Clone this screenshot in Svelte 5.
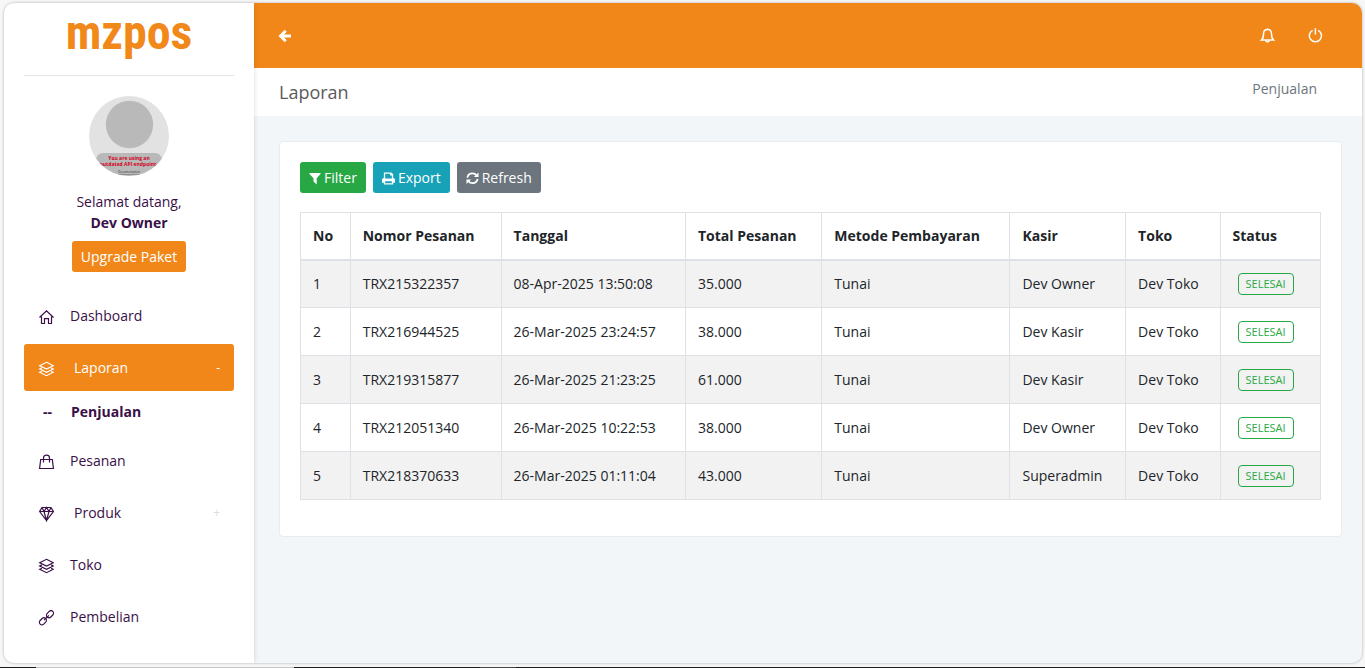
<script>
  const orders = [
    { no: 1, code: 'TRX215322357', date: '08-Apr-2025 13:50:08', total: '35.000', cashier: 'Dev Owner' },
    { no: 2, code: 'TRX216944525', date: '26-Mar-2025 23:24:57', total: '38.000', cashier: 'Dev Kasir' },
    { no: 3, code: 'TRX219315877', date: '26-Mar-2025 21:23:25', total: '61.000', cashier: 'Dev Kasir' },
    { no: 4, code: 'TRX212051340', date: '26-Mar-2025 10:22:53', total: '38.000', cashier: 'Dev Owner' },
    { no: 5, code: 'TRX218370633', date: '26-Mar-2025 01:11:04', total: '43.000', cashier: 'Superadmin' }
  ];
  const headings = ['No', 'Nomor Pesanan', 'Tanggal', 'Total Pesanan', 'Metode Pembayaran', 'Kasir', 'Toko', 'Status'];
  const menu = [
    { label: 'Dashboard', icon: 'home' },
    { label: 'Laporan', icon: 'layers', active: true, mark: '-', child: 'Penjualan' },
    { label: 'Pesanan', icon: 'bag' },
    { label: 'Produk', icon: 'diamond', mark: '+' },
    { label: 'Toko', icon: 'layers' },
    { label: 'Pembelian', icon: 'link' }
  ];
</script>

{#snippet lineIcon(name)}
  <svg class="icon" viewBox="0 0 16 16" aria-hidden="true">
    {#if name === 'home'}
      <path d="M1.500 8.500 8.500 1.800l7 6.700M3.500 7.500v7h3V9.700h4v4.800h3v-7" />
    {:else if name === 'layers'}
      <path d="M8.500 1.300 15.300 4.700 8.500 8.100 1.700 4.700ZM3.900 6.900 1.700 8l6.800 3.400L15.300 8l-2.200-1.100M3.900 10.200 1.700 11.300l6.800 3.400 6.800-3.400-2.200-1.100" />
    {:else if name === 'bag'}
      <path d="M2.700 5.500h11.600l1.100 9H1.600ZM5.500 8.500V4c0-1.900 1-2.800 3-2.800s3 .9 3 2.800v4.500" />
    {:else if name === 'diamond'}
      <path d="M4 1.500h9l2.400 4L8.500 14.500 1.600 5.500ZM1.600 5.500h13.800M4 1.500l2 4 2.500 9 2.500-9 2-4M6 5.500l2.500-4 2.500 4" />
    {:else if name === 'link'}
      <rect x="-3.900" y="-2.500" width="7.800" height="5" rx="2.500" transform="translate(4.900 11.300) rotate(-45)" />
      <rect x="-3.900" y="-2.500" width="7.800" height="5" rx="2.500" transform="translate(12 4.200) rotate(-45)" />
      <path d="m6 10.200 4.900-4.900" />
    {/if}
  </svg>
{/snippet}

<div class="page">
  <div class="frame">
    <aside class="sidebar">
      <div class="brand">mzpos</div>
      <div class="profile">
        <svg class="avatar" viewBox="0 0 80 80" role="img" aria-label="Avatar">
          <defs><clipPath id="round"><circle cx="40" cy="40" r="40" /></clipPath></defs>
          <g clip-path="url(#round)">
            <rect width="80" height="80" fill="#e2e2e2" />
            <circle cx="40.500" cy="28.500" r="23.700" fill="#b9b9b9" />
            <rect x="7" y="57" width="66" height="30" rx="7" fill="#b9b9b9" />
            <text x="40" y="64" class="warn">You are using an</text>
            <text x="39" y="70" class="warn">outdated API endpoint</text>
            <text x="40" y="77" class="docs">Documentation</text>
          </g>
        </svg>
        <div class="welcome">Selamat datang,<br /><strong>Dev Owner</strong></div>
        <button class="btn upgrade">Upgrade Paket</button>
      </div>
      <nav>
        {#each menu as item}
          <a href="#menu" class="item" class:active={item.active}>
            {@render lineIcon(item.icon)}
            <span class="label" class:group={item.mark}>{item.label}</span>
            {#if item.mark}<span class="mark">{item.mark}</span>{/if}
          </a>
          {#if item.child}
            <a href="#menu" class="child"><span class="dashes">--</span>{item.child}</a>
          {/if}
        {/each}
      </nav>
    </aside>

    <main>
      <header class="topbar">
        <button class="tool" aria-label="Kembali">
          <svg class="arrow" viewBox="0 0 14 14"><path d="M7.700 1.700 2.600 7l5.100 5.300M3.200 7H13" fill="none" stroke="currentColor" stroke-width="3" /></svg>
        </button>
        <div class="tools">
          <button class="tool" aria-label="Notifikasi">
            <svg class="icon" viewBox="0 0 16 16"><path d="M8.500 .3v1M2.500 12h12c-1.500-1.300-2-2.600-2-6 0-3-1.500-4.500-4-4.500S4.500 3 4.500 6c0 3.400-.5 4.700-2 6ZM6.700 12.300c.2 2.300 3.400 2.300 3.600 0" /></svg>
          </button>
          <button class="tool" aria-label="Keluar">
            <svg class="icon" viewBox="0 0 16 16"><path d="M5.600 2.300A6.100 6.100 0 1 0 11.200 2.300M8.400 .2v6.400" /></svg>
          </button>
        </div>
      </header>
      <div class="heading">
        <h1>Laporan</h1>
        <span>Penjualan</span>
      </div>
      <section class="card">
        <div class="actions">
          <button class="btn green">
            <svg class="glyph" viewBox="0 0 12 14"><path d="M.5 2h11v1L7.700 7.300V13.500L4.500 10.500V7.300L.5 3Z" fill="currentColor" /></svg>Filter
          </button>
          <button class="btn teal">
            <svg class="glyph wide" viewBox="0 0 14 14"><path fill-rule="evenodd" d="M2 1h8l2 2v4a2 2 0 0 1 2 2v3h-2v2H2v-2H0V9a2 2 0 0 1 2-2ZM3.400 2.300V7.500h7.200V4.300H8.700v-2ZM3.400 10.500v2.200h7.200v-2.200Z" fill="currentColor" /></svg>Export
          </button>
          <button class="btn grey">
            <svg class="glyph wide" viewBox="0 0 14 14"><path d="M1.500 6.500C2 3.500 4.500 2 7 2c1.800 0 3.300.8 4.300 2M12.500 8C12 11 9.500 12.500 7 12.500c-1.800 0-3.300-.8-4.300-2" fill="none" stroke="currentColor" stroke-width="2" /><path d="M13.500 1v5h-5ZM.5 13.500v-5h5Z" fill="currentColor" /></svg>Refresh
          </button>
        </div>
        <table>
          <thead><tr>{#each headings as h}<th>{h}</th>{/each}</tr></thead>
          <tbody>
            {#each orders as o}
              <tr>
                <td>{o.no}</td><td>{o.code}</td><td>{o.date}</td><td>{o.total}</td><td>Tunai</td><td>{o.cashier}</td><td>Dev Toko</td>
                <td><span class="badge">SELESAI</span></td>
              </tr>
            {/each}
          </tbody>
        </table>
      </section>
    </main>
  </div>
  <div class="edge"></div>
</div>

<style>
  :global(body) { margin: 0; }
  .page, .page * { box-sizing: border-box; }
  .page {
    min-height: 100vh;
    display: flex;
    flex-direction: column;
    background: #f7f7f7;
    padding: 3px 0 0;
    font-family: "Open Sans", "Noto Sans", sans-serif;
    font-size: 14px;
    line-height: 21px;
    color: #212529;
  }
  .frame {
    flex: 1;
    display: flex;
    margin: 0 3px 4px 4px;
    border-radius: 10px;
    overflow: hidden;
    background: #f2f6f9;
    box-shadow: 0 0 3px rgba(0, 0, 0, 0.3);
  }
  .edge {
    height: 1px;
    background: linear-gradient(90deg, #1c1c1c 36px, #c4c4c4 36px 294px, #1c1c1c 294px 480px, #444 480px 516px, #1c1c1c 516px);
  }
  button { font: inherit; cursor: pointer; }
  a { color: inherit; text-decoration: none; }
  .icon { width: 16px; height: 16px; fill: none; stroke: currentColor; stroke-width: 1.2; display: block; }

  .sidebar {
    width: 250px;
    flex: none;
    padding: 0 20px;
    background: #fff;
    color: #3a1049;
    box-shadow: 0 0 5px rgba(0, 0, 0, 0.15);
    z-index: 1;
  }
  .brand {
    height: 73px;
    border-bottom: 1px solid #e6e6e6;
    text-align: center;
    color: #f1881a;
    font: bold 48px/60px "Roboto Condensed", Roboto, sans-serif;
  }
  .profile { display: flex; flex-direction: column; align-items: center; padding-top: 20px; }
  .avatar { width: 80px; height: 80px; }
  .warn { font: bold 5px "Open Sans", sans-serif; fill: #d0021b; text-anchor: middle; }
  .docs { font: 3px "Open Sans", sans-serif; fill: #333; text-anchor: middle; text-decoration: underline; }
  .welcome { margin-top: 15px; text-align: center; }
  strong { font-weight: 700; }
  .btn {
    display: inline-flex;
    align-items: center;
    height: 31px;
    padding: 0 9px;
    border: 0;
    border-radius: 3px;
    color: #fff;
  }
  .upgrade { margin-top: 8px; background: #f18719; }
  nav { margin-top: 20px; }
  .item {
    display: flex;
    align-items: center;
    height: 47px;
    margin-bottom: 5px;
    padding: 0 14px;
    border-radius: 3px;
  }
  .item .icon { margin-top: 3px; }
  .label { margin-left: 16px; }
  .group { margin-left: 20px; }
  .active { margin-bottom: 0; background: #f18719; color: #fff; }
  .mark { margin-left: auto; color: #ddd; font-size: 12px; }
  .active .mark { color: #fff; }
  .child { display: flex; align-items: center; height: 41px; margin-bottom: 5px; padding-left: 19px; font-weight: 700; }
  .dashes { width: 28px; }

  main { flex: 1; min-width: 0; }
  .topbar {
    height: 65px;
    display: flex;
    align-items: center;
    justify-content: space-between;
    padding: 0 39px 0 24px;
    background: #f18719;
  }
  .tool { display: block; padding: 0; border: 0; background: none; color: #fff; }
  .topbar .icon { stroke-width: 1.5; overflow: visible; }
  .tools { display: flex; gap: 32px; }
  .arrow { width: 14px; height: 14px; display: block; }
  .heading {
    height: 48px;
    display: flex;
    align-items: center;
    justify-content: space-between;
    padding: 0 45px 0 25px;
    background: #fff;
    color: #6c757d;
  }
  .heading span { padding-bottom: 8px; }
  h1 { margin: 0; font-size: 18px; font-weight: 400; color: #5a5a5a; }
  .card {
    margin: 25px 20px 0 25px;
    padding: 20px 20px 36px;
    border: 1px solid #e9ecef;
    border-radius: 4px;
    background: #fff;
  }
  .actions { display: flex; gap: 7px; margin-bottom: 19px; }
  .glyph { width: 12px; height: 14px; margin-right: 3px; }
  .wide { width: 13px; }
  .green { background: #28a745; }
  .teal { background: #17a2b8; }
  .grey { background: #6c757d; }
  table { width: 100%; border-collapse: collapse; }
  th, td { height: 48px; padding: 0 12px; border: 1px solid #dee2e6; text-align: left; }
  th { height: 47px; border-bottom-width: 2px; font-weight: 700; }
  tbody tr:nth-child(odd) { background: #f2f2f2; }
  .badge {
    display: inline-block;
    margin: 0 5px;
    padding: 0 7px;
    border: 1px solid #28a745;
    border-radius: 4px;
    color: #28a745;
    font-size: 11px;
    line-height: 20px;
    vertical-align: middle;
  }
</style>
